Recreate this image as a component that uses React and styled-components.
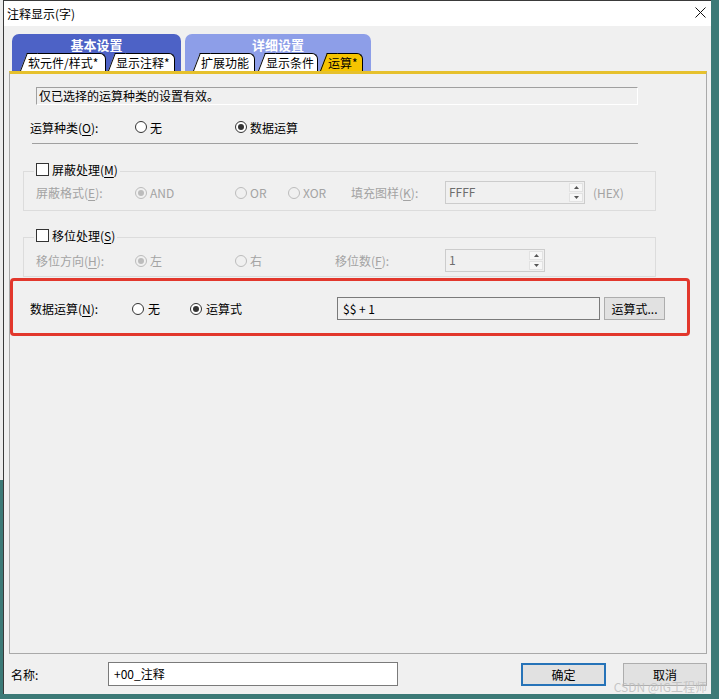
import React from 'react';
import styled, { createGlobalStyle } from 'styled-components';

const FONT = `"Noto Sans CJK SC", "Noto Sans", "Liberation Sans", sans-serif`;
const TEAL = '#3c7a77';

const Global = createGlobalStyle`
  html, body { margin: 0; padding: 0; background: ${TEAL}; }
  body { font-family: ${FONT}; font-size: 12px; color: #000; }
  #root { width: 719px; height: 699px; }
  u { text-decoration-thickness: 1px; text-underline-offset: 2px; }
`;

const Screen = styled.div`
  display: flex;
  width: 719px;
  height: 699px;
  overflow: hidden;
  background: ${TEAL};
`;

const LeftStrip = styled.div`
  width: 3px;
  height: 699px;
  flex: none;
  background: linear-gradient(to bottom, #ececec 0, #ececec 480px, ${TEAL} 480px);
`;

const Dialog = styled.div`
  position: relative;
  flex: none;
  width: 708px;
  height: 694px;
  box-sizing: border-box;
  border-top: 1px solid #3a3a3a;
  border-left: 1px solid #3a3a3a;
  background: #f0f0f0;
  display: flex;
  flex-direction: column;
`;

const TitleBar = styled.div`
  flex: none;
  height: 25px;
  background: #fff;
  display: flex;
  align-items: center;
  justify-content: space-between;
  padding: 0 5px 0 3px;
  font-size: 12px;
`;

const CloseIcon = styled.svg`
  display: block;
  margin-top: -2px;
`;

const Body = styled.div`
  flex: 1;
  min-height: 0;
  display: flex;
  flex-direction: column;
  padding: 8px 4px 0 5px;
`;

const TabStrip = styled.div`
  display: flex;
  gap: 4px;
  height: 37px;
  margin-left: 3px;
  flex: none;
`;

const TabGroup = styled.div`
  width: ${p => p.$w}px;
  box-sizing: border-box;
  background: ${p => p.$bg};
  border-radius: 7px 7px 0 0;
  display: flex;
  flex-direction: column;
  padding-left: 8px;
`;

const GroupTitle = styled.div`
  height: 19px;
  line-height: 21px;
  text-align: center;
  color: #fff;
  font-weight: bold;
  font-size: 13px;
  margin-left: -8px;
`;

const TabsRow = styled.div`
  display: flex;
  height: 18px;
  margin-top: auto;
`;

const Tab = styled.div`
  position: relative;
  isolation: isolate;
  flex: none;
  width: ${p => p.$w}px;
  height: 18px;
  box-sizing: border-box;
  margin-left: ${p => p.$gap || 0}px;
  padding-left: 8px;
  line-height: 19px;
  font-size: 12px;
  white-space: nowrap;
  color: #000;
  &::before {
    content: '';
    position: absolute;
    z-index: -1;
    top: 0;
    bottom: 0;
    left: 7px;
    right: 0;
    background: ${p => (p.$active ? '#f6c400' : '#fff')};
    border-top: 1px solid #000;
    border-right: 1px solid #000;
    border-top-right-radius: 6px;
  }
  &::after {
    content: '';
    position: absolute;
    z-index: -1;
    top: 0;
    bottom: 0;
    left: 0;
    width: 10px;
    background: ${p => (p.$active ? '#f6c400' : '#fff')};
    border-left: 1px solid #000;
    border-top: 1px solid #000;
    transform-origin: bottom left;
    transform: skewX(-21deg);
  }
`;

const Panel = styled.div`
  flex: none;
  height: 583px;
  box-sizing: border-box;
  border: 1px solid #a9a9a9;
  border-top: 3px solid #e6c12d;
  display: flex;
  flex-direction: column;
`;

const InfoBox = styled.div`
  margin: 13px 0 0 26px;
  width: 602px;
  height: 18px;
  box-sizing: border-box;
  border-top: 1px solid #a0a0a0;
  border-left: 1px solid #a0a0a0;
  border-bottom: 1px solid #fff;
  border-right: 1px solid #fff;
  padding-left: 2px;
  line-height: 16px;
  font-size: 12px;
`;

const Row = styled.div`
  display: flex;
  align-items: center;
  height: ${p => p.$h || 23}px;
  margin-top: ${p => p.$mt || 0}px;
  padding-left: ${p => p.$pl || 0}px;
`;

const Label = styled.span`
  flex: none;
  width: ${p => p.$w}px;
  color: ${p => (p.$disabled ? '#a3a3a3' : '#000')};
  white-space: nowrap;
`;

const Separator = styled.div`
  margin: 6px 0 0 22px;
  width: 606px;
  height: 1px;
  background: #a0a0a0;
  flex: none;
`;

const GroupBox = styled.div`
  position: relative;
  flex: none;
  margin: ${p => p.$mt}px 0 0 13px;
  width: 633px;
  box-sizing: border-box;
  border: 1px solid #dcdcdc;
  padding: ${p => p.$pt}px 0 ${p => p.$pb}px 12px;
`;

const Legend = styled.div`
  position: absolute;
  top: -9px;
  left: 10px;
  height: 13px;
  display: flex;
  align-items: center;
  gap: 3px;
  padding: 0 2px;
  background: #f0f0f0;
  white-space: nowrap;
`;

const CheckBox = styled.span`
  width: 13px;
  height: 13px;
  box-sizing: border-box;
  border: 1px solid #333;
  background: #fff;
  flex: none;
`;

const RadioItem = styled.span`
  flex: none;
  display: flex;
  align-items: center;
  gap: ${p => p.$gap || 3}px;
  width: ${p => p.$w}px;
  color: ${p => (p.$disabled ? '#a3a3a3' : '#000')};
  white-space: nowrap;
`;

const RadioCircle = styled.span`
  flex: none;
  width: 12px;
  height: 12px;
  box-sizing: border-box;
  border-radius: 50%;
  border: 1px solid ${p => (p.$disabled ? '#bcbcbc' : '#333')};
  background: ${p => (p.$disabled ? '#f0f0f0' : '#fff')};
  display: flex;
  align-items: center;
  justify-content: center;
  &::after {
    content: '';
    width: 6px;
    height: 6px;
    border-radius: 50%;
    background: ${p => (p.$checked ? (p.$disabled ? '#bcbcbc' : '#333') : 'transparent')};
  }
`;

const Spin = styled.div`
  flex: none;
  width: ${p => p.$w}px;
  height: 23px;
  box-sizing: border-box;
  border: 1px solid #cccccc;
  background: #f0f0f0;
  display: flex;
`;

const SpinValue = styled.div`
  flex: 1;
  padding-left: 3px;
  line-height: 20px;
  color: #6d6d6d;
`;

const SpinButtons = styled.div`
  width: 16px;
  display: flex;
  flex-direction: column;
  padding: 1px;
  gap: 1px;
  box-sizing: border-box;
`;

const SpinBtn = styled.div`
  flex: 1;
  display: flex;
  align-items: center;
  justify-content: center;
  background: #f7f7f7;
  border: 1px solid #e2e2e2;
`;

const Unit = styled.span`
  margin-left: 8px;
  color: #a3a3a3;
`;

const Highlight = styled.div`
  flex: none;
  margin-top: 1px;
  width: 680px;
  box-sizing: border-box;
  border: 3px solid #e2372c;
  border-radius: 4px;
  padding: 16px 0 13px 17px;
`;

const ExprField = styled.div`
  flex: none;
  width: 263px;
  height: 23px;
  box-sizing: border-box;
  border: 1px solid #7a7a7a;
  background: #f0f0f0;
  padding-left: 5px;
  line-height: 21px;
`;

const Button = styled.div`
  flex: none;
  width: ${p => p.$w}px;
  height: 23px;
  box-sizing: border-box;
  margin-left: ${p => p.$ml || 0}px;
  background: #e1e1e1;
  border: ${p => (p.$default ? '2px solid #2673b8' : '1px solid #adadad')};
  display: flex;
  align-items: center;
  justify-content: center;
  font-size: 12px;
`;

const Footer = styled.div`
  flex: none;
  height: 40px;
  display: flex;
  align-items: center;
  padding: 0 0 0 2px;
`;

const NameInput = styled.div`
  flex: none;
  width: 290px;
  height: 24px;
  box-sizing: border-box;
  border: 1px solid #7a7a7a;
  background: #fff;
  padding-left: 5px;
  line-height: 22px;
`;

const Spacer = styled.div`
  flex: 1;
`;

const Watermark = styled.div`
  position: absolute;
  top: 677px;
  right: 4px;
  font-size: 12px;
  color: rgba(190, 190, 190, 0.85);
  pointer-events: none;
  white-space: nowrap;
`;

const Radio = ({ w, label, checked, disabled, gap }) => (
  <RadioItem $w={w} $disabled={disabled} $gap={gap}>
    <RadioCircle $checked={checked} $disabled={disabled} />
    {label}
  </RadioItem>
);

const Arrow = ({ up }) => (
  <svg width="5" height="3" viewBox="0 0 5 3">
    <path d={up ? 'M0 3 L2.5 0 L5 3 Z' : 'M0 0 L2.5 3 L5 0 Z'} fill="#555" />
  </svg>
);

const SpinBox = ({ w, value }) => (
  <Spin $w={w}>
    <SpinValue>{value}</SpinValue>
    <SpinButtons>
      <SpinBtn><Arrow up /></SpinBtn>
      <SpinBtn><Arrow /></SpinBtn>
    </SpinButtons>
  </Spin>
);

export default function App() {
  return (
    <>
      <Global />
      <Screen>
        <LeftStrip />
        <Dialog>
          <TitleBar>
            <span>注释显示(字)</span>
            <CloseIcon width="11" height="11" viewBox="0 0 11 11">
              <path d="M0.5 0.5 L10.5 10.5 M10.5 0.5 L0.5 10.5" stroke="#111" strokeWidth="1" />
            </CloseIcon>
          </TitleBar>
          <Body>
            <TabStrip>
              <TabGroup $w={169} $bg="#4d62c6">
                <GroupTitle>基本设置</GroupTitle>
                <TabsRow>
                  <Tab $w={86}>软元件/样式*</Tab>
                  <Tab $w={67} $gap={2}>显示注释*</Tab>
                </TabsRow>
              </TabGroup>
              <TabGroup $w={186} $bg="#8d9ee8">
                <GroupTitle>详细设置</GroupTitle>
                <TabsRow>
                  <Tab $w={62}>扩展功能</Tab>
                  <Tab $w={60} $gap={3}>显示条件</Tab>
                  <Tab $w={43} $gap={2} $active>运算*</Tab>
                </TabsRow>
              </TabGroup>
            </TabStrip>
            <Panel>
              <InfoBox>仅已选择的运算种类的设置有效。</InfoBox>
              <Row $h={20} $mt={12} $pl={20}>
                <Label $w={105}>运算种类(<u>O</u>):</Label>
                <Radio w={100} label="无" />
                <Radio w={100} label="数据运算" checked />
              </Row>
              <Separator />
              <GroupBox $mt={27} $pt={9} $pb={6}>
                <Legend>
                  <CheckBox />
                  <span>屏蔽处理(<u>M</u>)</span>
                </Legend>
                <Row>
                  <Label $w={99} $disabled>屏蔽格式(<u>E</u>):</Label>
                  <Radio w={100} label="AND" checked disabled />
                  <Radio w={53} label="OR" disabled />
                  <Radio w={63} label="XOR" disabled />
                  <Label $w={94} $disabled>填充图样(<u>K</u>):</Label>
                  <SpinBox w={140} value="FFFF" />
                  <Unit>(HEX)</Unit>
                </Row>
              </GroupBox>
              <GroupBox $mt={26} $pt={11} $pb={4}>
                <Legend>
                  <CheckBox />
                  <span>移位处理(<u>S</u>)</span>
                </Legend>
                <Row>
                  <Label $w={99} $disabled>移位方向(<u>H</u>):</Label>
                  <Radio w={100} label="左" checked disabled />
                  <Radio w={100} label="右" disabled />
                  <Label $w={110} $disabled>移位数(<u>F</u>):</Label>
                  <SpinBox w={100} value="1" />
                </Row>
              </GroupBox>
              <Highlight>
                <Row>
                  <Label $w={102}>数据运算(<u>N</u>):</Label>
                  <Radio w={58} label="无" gap={4} />
                  <Radio w={147} label="运算式" checked gap={4} />
                  <ExprField>$$ + 1</ExprField>
                  <Button $w={61} $ml={4}>运算式...</Button>
                </Row>
              </Highlight>
            </Panel>
            <Footer>
              <Label $w={97}>名称:</Label>
              <NameInput>+00_注释</NameInput>
              <Spacer />
              <Button $w={85} $default>确定</Button>
              <Button $w={84} $ml={17}>取消</Button>
            </Footer>
          </Body>
          <Watermark>CSDN @IG工程师</Watermark>
        </Dialog>
      </Screen>
    </>
  );
}
